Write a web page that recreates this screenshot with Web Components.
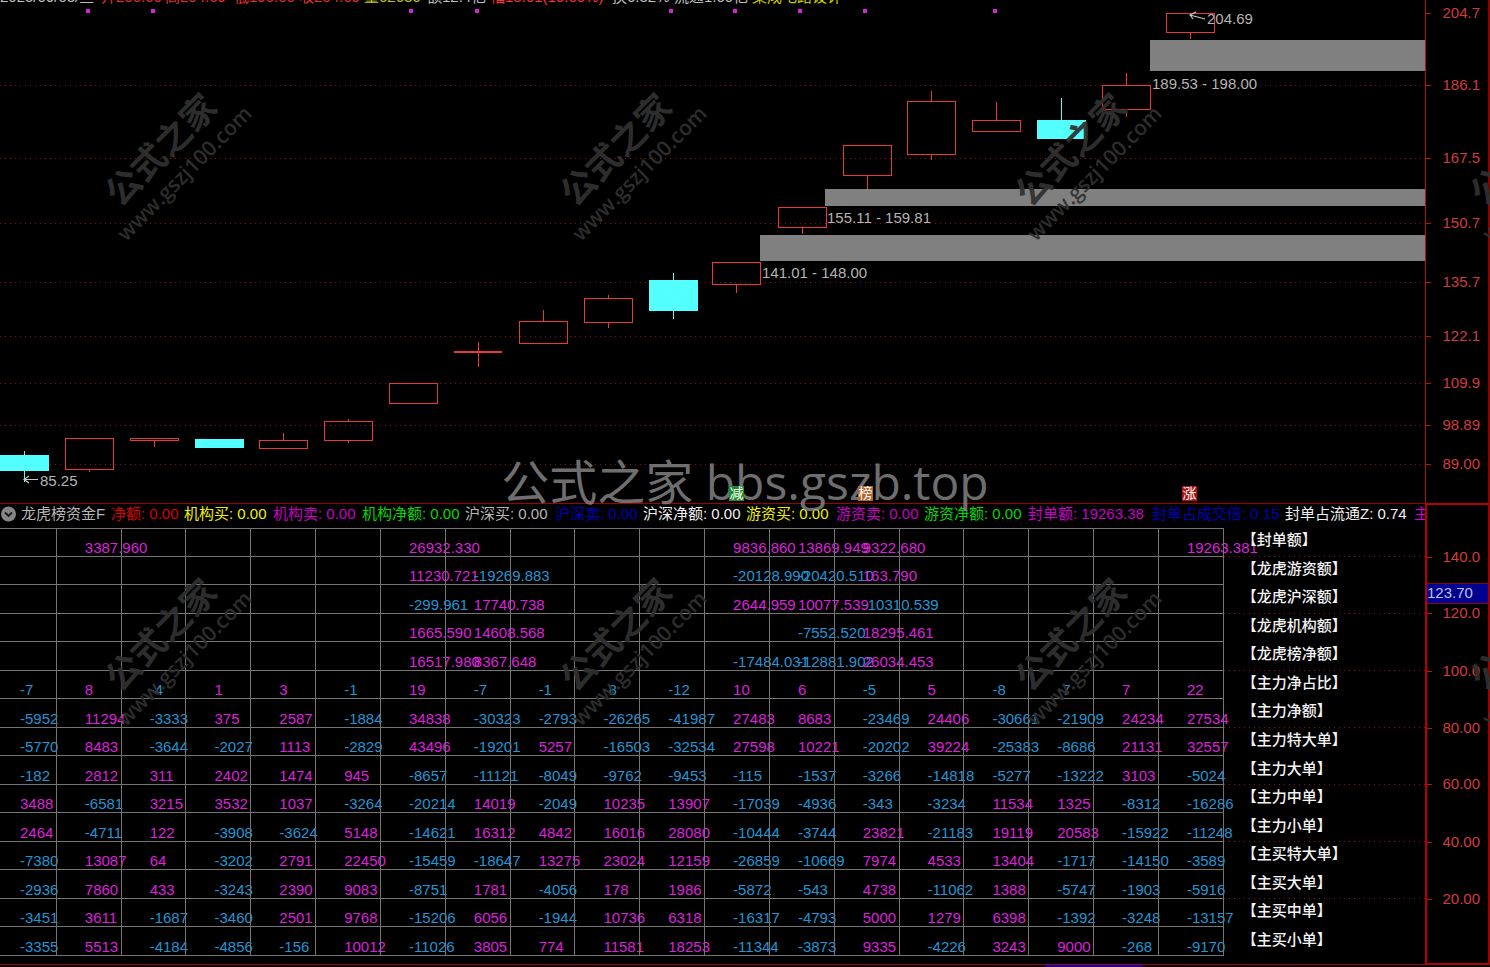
<!DOCTYPE html>
<html lang="zh-CN">
<head>
<meta charset="utf-8">
<meta name="viewport" content="width=device-width, initial-scale=1">
<title>龙虎榜资金</title>
<style>
html,body{margin:0;background:#000;}
body{font:15px/16px "Liberation Sans","Noto Sans CJK SC",sans-serif;color:#c0c0c0;}
</style>
</head>
<body>
<stock-app></stock-app>
<script>
const define = (name, html, setup) => customElements.define(name, class extends HTMLElement {
  constructor() {
    super();
    this.attachShadow({ mode: 'open' }).innerHTML = html;
  }
  connectedCallback() {
    if (setup && !this.ready) { this.ready = true; setup(this.shadowRoot, this); }
  }
});
const pct = (v, total) => (v / total * 100) + '%';

/* Quote line above the chart: [text, colour, share of the width] */
const QUOTE = [
  ['2025/09/03/三', '#c0c0c0', 101], ['开200.00', '#e03030', 64], ['高204.69', '#e03030', 69],
  ['低190.00', '#e03030', 65], ['收204.69', '#e03030', 65], ['量62636', '#c8c800', 63],
  ['额12.4亿', '#c0c0c0', 63], ['幅18.61(10.00%)', '#ff3030', 122], ['换6.32%', '#c0c0c0', 62],
  ['流通1.00亿', '#c0c0c0', 78], ['集成电路设计', '#c8c800', 673]
];
const LEGEND = [
  ['龙虎榜资金F', '#b8b8b8', 90], ['净额: 0.00', '#d80000', 73], ['机构买: 0.00', '#f0f000', 89],
  ['机构卖: 0.00', '#c800c8', 89], ['机构净额: 0.00', '#00d800', 103], ['沪深买: 0.00', '#b8b8b8', 90],
  ['沪深卖: 0.00', '#0000b8', 88], ['沪深净额: 0.00', '#f0f0f0', 103], ['游资买: 0.00', '#f0f000', 90],
  ['游资卖: 0.00', '#c800c8', 88], ['游资净额: 0.00', '#00d800', 104], ['封单额: 19263.38', '#c800c8', 124],
  ['封单占成交倍: 0.15', '#0000b8', 133], ['封单占流通Z: 0.74', '#f0f0f0', 129], ['主力净额: 27534', '#d800d8', 11]
];
define('colour-line', `<style>
:host{display:grid;min-width:0;overflow:hidden}
span{white-space:nowrap;min-width:0}
</style>`, (root, host) => {
  const items = host.getAttribute('kind') === 'quote' ? QUOTE : LEGEND;
  host.style.gridTemplateColumns = items.map(i => `minmax(0,${i[2]}fr)`).join(' ');
  for (const [text, colour] of items) {
    const s = document.createElement('span');
    s.textContent = text;
    s.style.color = colour;
    root.append(s);
  }
});

/* Candles: centre, high, body top, body bottom, low, falling */
const CANDLES = [
  [24,450,455,470,481,1],[89,438,438,469,471],[154,438,438,440,446],[219,439,439,447,447,1],
  [283,432,440,448,448],[348,418,421,440,442],[413,383,383,403,403],[478,341,352,352,366],
  [543,309,321,343,343],[608,294,298,322,327],[673,272,280,310,318,1],[736,262,262,284,292],
  [802,207,207,227,233],[867,145,145,175,188],[931,90,101,154,159],[996,101,120,131,131],
  [1061,97,120,138,138,1],[1126,72,85,109,116],[1190,13,13,32,38]
];
const DOTS = [88,153,411,477,671,735,800,865,995];
define('candle-chart', `<style>
:host{display:block;position:relative;overflow:hidden}
svg{position:absolute;inset:0;width:100%;height:100%;display:block}
.note{position:absolute;white-space:nowrap;color:#b4b4b4;transform:translateY(-50%)}
.tag{position:absolute;z-index:2;width:15px;height:15px;font-size:14px;line-height:15px;color:#fff;text-align:center}
</style>
<svg viewBox="0 5 1425 498" preserveAspectRatio="none" shape-rendering="crispEdges" aria-hidden="true"></svg>`, root => {
  let g = '';
  for (const y of [85,158,223,282,336,383,425,464])
    g += `<path d="M0 ${y}.5H1425" stroke="#8c1010" stroke-dasharray="1 4" fill="none"/>`;
  for (const [x,y,h] of [[1150,40,31],[825,189,17],[760,235,26]])
    g += `<rect x="${x}" y="${y}" width="${1425-x}" height="${h}" fill="#808080"/>`;
  for (const x of DOTS) g += `<rect x="${x-2}" y="9" width="4" height="4" fill="#d820d8"/>`;
  for (const [x,hi,t,b,lo,down] of CANDLES) {
    const c = down ? '#54ffff' : '#e83838';
    g += `<g transform="translate(.5 .5)" stroke="${c}" fill="${down ? c : 'none'}">`
      + `<path d="M${x} ${hi}V${t}M${x} ${b}V${lo}"/><rect x="${x-24}" y="${t}" width="48" height="${b-t}"/></g>`;
  }
  g += `<rect x="454" y="351" width="48" height="2" fill="#e83838"/>`;
  g += `<g shape-rendering="auto" fill="none" stroke="#c8c8c8" stroke-width="1.2">
    <path d="M24 479.5H38M29 476L24 479.5L29 483"/><path d="M1190 15L1205 19M1196 12L1190 15L1193 19"/></g>`;
  root.querySelector('svg').innerHTML = g;
  for (const [x,y,t] of [[1207,19,'204.69'],[1152,84,'189.53 - 198.00'],[827,218,'155.11 - 159.81'],[762,273,'141.01 - 148.00'],[40,481,'85.25']]) {
    const d = document.createElement('span');
    d.className = 'note'; d.textContent = t;
    d.style.left = pct(x,1425); d.style.top = pct(y-5,498);
    root.append(d);
  }
  for (const [x,t,c] of [[729,'减','#1c8c28'],[858,'榜','#b06428'],[1182,'涨','#b01010']]) {
    const d = document.createElement('span');
    d.className = 'tag'; d.textContent = t;
    d.style.left = pct(x,1425); d.style.top = pct(481,498); d.style.background = c;
    root.append(d);
  }
});

/* Price scale at the right edge; marks are [label, y] within data-height */
define('value-scale', `<style>
:host{display:block;position:relative;box-sizing:border-box;color:#d03c3c}
div{position:absolute;left:0;right:8px;height:16px;margin-top:-8px;text-align:right}
div::before{content:"";position:absolute;left:0;top:8px;width:5px;height:1px;background:#c01010}
</style><slot></slot>`, (root, host) => {
  const total = +host.dataset.height;
  for (const m of host.dataset.marks.split(' ')) {
    const [t, y] = m.split('@');
    const d = document.createElement('div');
    d.textContent = t; d.style.top = pct(+y, total);
    root.append(d);
  }
});

const _ = '';
const ROWS = [
  ['封单额', [_,'3387.960',_,_,_,_,'26932.330',_,_,_,_,'9836.860','13869.949','9322.680',_,_,_,_,'19263.381']],
  ['龙虎游资额', [_,_,_,_,_,_,'11230.721','-19269.883',_,_,_,'-20128.990','-20420.510','163.790',_,_,_,_,_]],
  ['龙虎沪深额', [_,_,_,_,_,_,'-299.961','17740.738',_,_,_,'2644.959','10077.539','-10310.539',_,_,_,_,_]],
  ['龙虎机构额', [_,_,_,_,_,_,'1665.590','14608.568',_,_,_,_,'-7552.520','18295.461',_,_,_,_,_]],
  ['龙虎榜净额', [_,_,_,_,_,_,'16517.980','8367.648',_,_,_,'-17484.031','-12881.902','26034.453',_,_,_,_,_]],
  ['主力净占比', [-7,8,-4,1,3,-1,19,-7,-1,-8,-12,10,6,-5,5,-8,-7,7,22]],
  ['主力净额', [-5952,11294,-3333,375,2587,-1884,34838,-30323,-2793,-26265,-41987,27483,8683,-23469,24406,-30661,-21909,24234,27534]],
  ['主力特大单', [-5770,8483,-3644,-2027,1113,-2829,43496,-19201,5257,-16503,-32534,27598,10221,-20202,39224,-25383,-8686,21131,32557]],
  ['主力大单', [-182,2812,311,2402,1474,945,-8657,-11121,-8049,-9762,-9453,-115,-1537,-3266,-14818,-5277,-13222,3103,-5024]],
  ['主力中单', [3488,-6581,3215,3532,1037,-3264,-20214,14019,-2049,10235,13907,-17039,-4936,-343,-3234,11534,1325,-8312,-16286]],
  ['主力小单', [2464,-4711,122,-3908,-3624,5148,-14621,16312,4842,16016,28080,-10444,-3744,23821,-21183,19119,20583,-15922,-11248]],
  ['主买特大单', [-7380,13087,64,-3202,2791,22450,-15459,-18647,13275,23024,12159,-26859,-10669,7974,4533,13404,-1717,-14150,-3589]],
  ['主买大单', [-2936,7860,433,-3243,2390,9083,-8751,1781,-4056,178,1986,-5872,-543,4738,-11062,1388,-5747,-1903,-5916]],
  ['主买中单', [-3451,3611,-1687,-3460,2501,9768,-15206,6056,-1944,10736,6318,-16317,-4793,5000,1279,6398,-1392,-3248,-13157]],
  ['主买小单', [-3355,5513,-4184,-4856,-156,10012,-11026,3805,774,11581,18253,-11344,-3873,9335,-4226,3243,9000,-268,-9170]]
];
/* Cell text sits below the grid lines in the stacking order. */
define('fund-table', `<style>
:host{display:block;min-height:0;overflow:hidden}
table{width:calc(100% + 8px);height:100%;margin-left:-8px;table-layout:fixed;border-collapse:separate;border-spacing:0;position:relative;z-index:0}
td,th{padding:0;white-space:nowrap;text-align:left;box-sizing:border-box}
td{border-right:1px solid #747474;border-bottom:1px solid #747474;vertical-align:bottom;padding-left:28px}
tr:first-child td{border-top:1px solid #747474}
td span{position:relative;z-index:-1;display:block;color:#dc20dc}
td .neg{color:#2096d4}
th{font-weight:500;color:#f4f4f4;padding:0 0 4px 18px}
tr:nth-child(odd):not(:last-child) th{background:repeating-linear-gradient(90deg,#8c1010 0 1px,transparent 1px 5px) left bottom/100% 1px no-repeat}
</style><table aria-label="龙虎榜资金"><colgroup></colgroup><tbody></tbody></table>`, root => {
  root.querySelector('colgroup').innerHTML = `<col style="width:${pct(1232/19,1433)}">`.repeat(19) + '<col>';
  root.querySelector('tbody').innerHTML = ROWS.map(([name, vals]) => '<tr>' + vals.map(v =>
    v === '' ? '<td></td>' : `<td><span${String(v)[0] === '-' ? ' class="neg"' : ''}>${v}</span></td>`
  ).join('') + `<th scope="row">【${name}】</th></tr>`).join('');
});

define('fund-legend', `<style>
:host{display:flex;align-items:center;height:24px;overflow:hidden;padding-bottom:4px;box-sizing:border-box}
button{flex:none;width:21px;height:16px;padding:0 4px 0 0;border:0;background:none;display:flex}
svg{width:17px;height:16px}
colour-line{flex:1;line-height:20px}
</style><button aria-label="指标菜单"><svg viewBox="0 0 17 16"><circle cx="8.5" cy="8" r="7.5" fill="#868686"/><path d="M5 6.5L8.5 10L12 6.5" fill="none" stroke="#181818" stroke-width="1.8"/></svg></button><colour-line kind="legend"></colour-line>`);

define('water-marks', `<style>
:host{position:absolute;inset:0;overflow:hidden;pointer-events:none}
.tile{position:absolute;display:grid;justify-items:center;transform:translate(-50%,-50%) rotate(-45deg);color:rgba(48,48,48,.94);white-space:nowrap}
.tile b{font:700 35px/42px "Noto Sans CJK SC",sans-serif}
.tile span{font:600 21px/28px "Open Sans",sans-serif}
.main{position:absolute;left:50%;top:50%;transform:translate(-50%,-50%);padding-bottom:4px;font:48px/56px "Open Sans","Noto Sans CJK SC",sans-serif;color:rgba(142,142,142,.78);white-space:nowrap}
</style><div class="main">公式之家 bbs.gszb.top</div>`, root => {
  for (const y of [158,643]) for (const x of [169,624,1079,1534]) {
    const d = document.createElement('div');
    d.className = 'tile';
    d.innerHTML = '<b>公式之家</b><span>www.gszj100.com</span>';
    d.style.left = pct(x,1490); d.style.top = pct(y,967);
    root.append(d);
  }
});

define('stock-app', `<style>
:host{display:grid;grid-template-rows:503fr 464fr;height:100vh;min-height:640px;position:relative;overflow:hidden;background:#000}
section{display:grid;grid-template-columns:minmax(0,1fr) 65px;min-height:0;min-width:0}
.plot{display:flex;flex-direction:column;min-width:0;min-height:0}
.quote{height:5px;flex:none;align-content:end;line-height:16px}
candle-chart,fund-table{flex:1}
.top value-scale{border-left:1px solid #b81010;border-right:2px solid #8c0000}
.low .plot{border-top:1px solid #a00000}
.low value-scale{border:2px solid #b80000;border-right-color:#a00000;margin-bottom:2px}
output{position:absolute;left:0;right:0;top:78px;height:19px;line-height:18px;background:#000090;border:solid #900010;border-width:1px 0;box-sizing:content-box;color:#c0c0e0}
footer{height:11px;flex:none;box-sizing:border-box;padding-top:8px;display:grid;grid-template-columns:1045fr 98fr 282fr;grid-template-rows:1px 2px}
footer i{background:#a00010;grid-column:1/-1}
footer b{background:#1000a0;grid-column:2}
</style>
<section class="top"><div class="plot"><colour-line class="quote" kind="quote"></colour-line><candle-chart></candle-chart></div>
<value-scale data-height="503" data-marks="204.7@13 186.1@85 167.5@158 150.7@223 135.7@282 122.1@336 109.9@383 98.89@425 89.00@464"></value-scale></section>
<section class="low"><div class="plot"><fund-legend></fund-legend><fund-table></fund-table><footer><i></i><b></b></footer></div>
<value-scale data-height="458" data-marks="140.0@52 120.0@108 100.0@166 80.00@223 60.00@279 40.00@337 20.00@394"><output>123.70</output></value-scale></section>
<water-marks aria-hidden="true"></water-marks>`);
</script>
</body>
</html>
